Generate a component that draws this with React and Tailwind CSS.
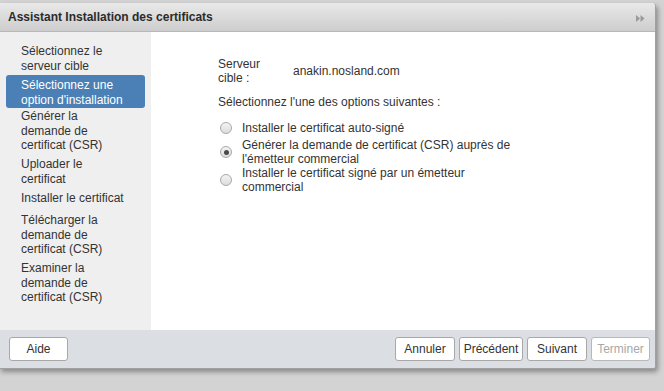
import React from "react";

const font = { fontFamily: '"Liberation Sans", Arial, sans-serif' };

function Radio({ checked }) {
  return (
    <span className="relative flex h-[12px] w-[12px] shrink-0 items-center justify-center rounded-full border border-[#a9a9a9] bg-gradient-to-b from-[#f4f4f4] to-[#dcdcdc]">
      {checked && <span className="h-[5px] w-[5px] rounded-full bg-[#4a4a4a]" />}
    </span>
  );
}

function NavItem({ children, className = "" }) {
  return <div className={"pl-[21px] pr-[4px] leading-[14.5px] " + className}>{children}</div>;
}

export default function App() {
  return (
    <div className="h-[391px] w-[664px] overflow-hidden bg-[#d3d3d3] pt-[3px] text-[12px] text-[#333]" style={font}>
      <div className="ml-[-1px] flex h-[366px] w-[657px] flex-col overflow-hidden rounded-tr-[4px] rounded-br-[3px] border border-t-0 border-[#a0a0a0] bg-white shadow-[2px_3px_5px_rgba(0,0,0,0.35)]">
        {/* Header */}
        <div className="flex h-[29px] shrink-0 items-center justify-between border-b border-[#b8b8b8] bg-gradient-to-b from-[#e9e9e9] to-[#cdcdcd] pl-[8px] pr-[10px]">
          <span className="text-[12px] font-bold text-[#2b2b2b]">Assistant Installation des certificats</span>
          <svg width="9" height="7" viewBox="0 0 9 7" className="mt-[3px]">
            <path d="M0 0 L4 3.5 L0 7 Z" fill="#9a9a9a" />
            <path d="M4.5 0 L8.5 3.5 L4.5 7 Z" fill="#9a9a9a" />
          </svg>
        </div>
        {/* Body */}
        <div className="flex min-h-0 flex-1">
          <div className="w-[151px] shrink-0 bg-[#efefef] pt-[12px]">
            <NavItem>Sélectionnez le<br />serveur cible</NavItem>
            <div className="mx-[6px] mt-[2px] rounded-[3px] bg-[#4a80b5] pb-[1px] pl-[15px] pt-[3px] pr-[4px] leading-[14.5px] text-white">
              Sélectionnez une<br />option d'installation
            </div>
            <NavItem className="mt-[1px]">Générer la<br />demande de<br />certificat (CSR)</NavItem>
            <NavItem className="mt-[4.5px]">Uploader le<br />certificat</NavItem>
            <NavItem className="mt-[5px]">Installer le certificat</NavItem>
            <NavItem className="mt-[7.5px]">Télécharger la<br />demande de<br />certificat (CSR)</NavItem>
            <NavItem className="mt-[4.5px]">Examiner la<br />demande de<br />certificat (CSR)</NavItem>
          </div>
          <div className="flex-1 bg-white pl-[67px] pt-[25px]">
            <div className="flex items-center leading-[14px]">
              <div className="w-[75px]">Serveur<br />cible :</div>
              <div>anakin.nosland.com</div>
            </div>
            <div className="mt-[10px] leading-[14px]">Sélectionnez l'une des options suivantes :</div>
            <div className="mt-[12px] flex items-center gap-[10px] pl-[2px] leading-[14px]">
              <Radio />
              <span>Installer le certificat auto-signé</span>
            </div>
            <div className="mt-[3px] flex items-center gap-[10px] pl-[2px] leading-[14px]">
              <Radio checked />
              <span>Générer la demande de certificat (CSR) auprès de<br />l'émetteur commercial</span>
            </div>
            <div className="mt-[0px] flex items-center gap-[10px] pl-[2px] leading-[14px]">
              <Radio />
              <span>Installer le certificat signé par un émetteur<br />commercial</span>
            </div>
          </div>
        </div>
        {/* Footer */}
        <div className="flex h-[38px] shrink-0 items-center justify-between bg-[#dbdfe4] pl-[9px] pr-[5px]">
          <button className="h-[24px] w-[59px] rounded-[3px] border border-[#a8a8a8] bg-white text-[12px] text-[#333]">Aide</button>
          <div className="flex gap-[4px]">
            <button className="h-[24px] w-[60px] rounded-[3px] border border-[#a8a8a8] bg-white text-[12px] text-[#333]">Annuler</button>
            <button className="h-[24px] w-[64px] rounded-[3px] border border-[#a8a8a8] bg-white text-[12px] text-[#333]">Précédent</button>
            <button className="h-[24px] w-[60px] rounded-[3px] border border-[#a8a8a8] bg-white text-[12px] text-[#333]">Suivant</button>
            <button className="h-[24px] w-[59px] rounded-[3px] border border-[#b8b8b8] bg-white text-[12px] text-[#a8a8a8]">Terminer</button>
          </div>
        </div>
      </div>
    </div>
  );
}
